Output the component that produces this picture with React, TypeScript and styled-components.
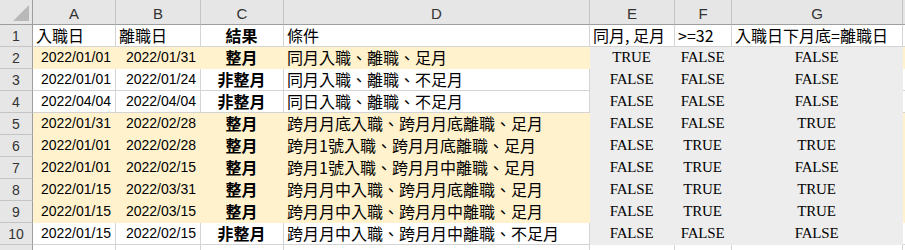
import styled, { createGlobalStyle } from 'styled-components';

const GlobalStyle = createGlobalStyle`
  html, body {
    margin: 0;
    padding: 0;
    background: #ffffff;
  }
`;

type Fill = 'none' | 'yellow' | 'gray';

const fills: Record<Fill, string> = {
  none: '#ffffff',
  yellow: '#fff2cc',
  gray: '#ededed',
};

const Sheet = styled.div`
  display: grid;
  grid-template-columns: 33px 83px 85px 83px 306px 85px 57px 171px 1fr;
  grid-template-rows: 25px repeat(11, 22px);
  width: 905px;
  height: 250px;
  overflow: hidden;
  background: #ffffff;
`;

const Corner = styled.div`
  position: relative;
  background: #e6e6e6;
  border-right: 1px solid #9e9e9e;
  border-bottom: 1px solid #9e9e9e;
  box-sizing: border-box;

  &::after {
    content: '';
    position: absolute;
    right: 3px;
    bottom: 3px;
    width: 0;
    height: 0;
    border-left: 16px solid transparent;
    border-bottom: 16px solid #b9b9b9;
  }
`;

const ColHeader = styled.div`
  display: flex;
  align-items: center;
  justify-content: center;
  background: #e6e6e6;
  border-right: 1px solid #c4c4c4;
  border-bottom: 1px solid #9e9e9e;
  box-sizing: border-box;
  font-family: 'Liberation Sans', Arial, sans-serif;
  font-size: 15px;
  color: #333333;
  padding-top: 2px;
`;

const RowHeader = styled.div`
  display: flex;
  align-items: center;
  justify-content: center;
  background: #e6e6e6;
  border-right: 1px solid #9e9e9e;
  border-bottom: 1px solid #c4c4c4;
  box-sizing: border-box;
  font-family: 'Liberation Sans', Arial, sans-serif;
  font-size: 14px;
  color: #333333;
`;

type Kind = 'date' | 'text' | 'bold' | 'bool';

const Cell = styled.div<{ $fill: Fill; $kind: Kind; $align: 'left' | 'center' | 'right' }>`
  display: flex;
  align-items: flex-end;
  justify-content: ${(p) =>
    p.$align === 'left' ? 'flex-start' : p.$align === 'right' ? 'flex-end' : 'center'};
  box-sizing: border-box;
  background: ${(p) => fills[p.$fill]};
  border-right: 1px solid ${(p) => (p.$fill === 'none' ? '#d4d4d4' : fills[p.$fill])};
  border-bottom: 1px solid ${(p) => (p.$fill === 'none' ? '#d4d4d4' : fills[p.$fill])};
  padding: 0 4px 1px 3px;
  white-space: nowrap;
  overflow: visible;
  color: #000000;
  line-height: 20px;
  font-family: ${(p) =>
    p.$kind === 'date'
      ? "'Liberation Sans', 'Noto Sans CJK TC', sans-serif"
      : p.$kind === 'bool'
      ? "'Liberation Serif', 'Noto Sans CJK TC', serif"
      : "'Noto Sans CJK TC', 'Liberation Sans', sans-serif"};
  font-size: ${(p) => (p.$kind === 'date' ? '14px' : p.$kind === 'bool' ? '15px' : '16px')};
  letter-spacing: ${(p) => (p.$kind === 'bool' ? '-0.2px' : 'normal')};
  font-weight: ${(p) => (p.$kind === 'bold' ? 700 : 400)};
`;

type Row = {
  fill: Fill;
  start: string;
  end: string;
  result: string;
  cond: string;
  e: string;
  f: string;
  g: string;
};

const rows: Row[] = [
  { fill: 'yellow', start: '2022/01/01', end: '2022/01/31', result: '整月', cond: '同月入職、離職、足月', e: 'TRUE', f: 'FALSE', g: 'FALSE' },
  { fill: 'none', start: '2022/01/01', end: '2022/01/24', result: '非整月', cond: '同月入職、離職、不足月', e: 'FALSE', f: 'FALSE', g: 'FALSE' },
  { fill: 'none', start: '2022/04/04', end: '2022/04/04', result: '非整月', cond: '同日入職、離職、不足月', e: 'FALSE', f: 'FALSE', g: 'FALSE' },
  { fill: 'yellow', start: '2022/01/31', end: '2022/02/28', result: '整月', cond: '跨月月底入職、跨月月底離職、足月', e: 'FALSE', f: 'FALSE', g: 'TRUE' },
  { fill: 'yellow', start: '2022/01/01', end: '2022/02/28', result: '整月', cond: '跨月1號入職、跨月月底離職、足月', e: 'FALSE', f: 'TRUE', g: 'TRUE' },
  { fill: 'yellow', start: '2022/01/01', end: '2022/02/15', result: '整月', cond: '跨月1號入職、跨月月中離職、足月', e: 'FALSE', f: 'TRUE', g: 'FALSE' },
  { fill: 'yellow', start: '2022/01/15', end: '2022/03/31', result: '整月', cond: '跨月月中入職、跨月月底離職、足月', e: 'FALSE', f: 'TRUE', g: 'TRUE' },
  { fill: 'yellow', start: '2022/01/15', end: '2022/03/15', result: '整月', cond: '跨月月中入職、跨月月中離職、足月', e: 'FALSE', f: 'TRUE', g: 'TRUE' },
  { fill: 'none', start: '2022/01/15', end: '2022/02/15', result: '非整月', cond: '跨月月中入職、跨月月中離職、不足月', e: 'FALSE', f: 'FALSE', g: 'FALSE' },
];

const columns = ['A', 'B', 'C', 'D', 'E', 'F', 'G', ''];

const App = () => (
  <>
    <GlobalStyle />
    <Sheet>
      <Corner />
      {columns.map((c, i) => (
        <ColHeader key={i}>{c}</ColHeader>
      ))}

      <RowHeader>1</RowHeader>
      <Cell $fill="none" $kind="text" $align="left">入職日</Cell>
      <Cell $fill="none" $kind="text" $align="left">離職日</Cell>
      <Cell $fill="none" $kind="bold" $align="center">結果</Cell>
      <Cell $fill="none" $kind="text" $align="left">條件</Cell>
      <Cell $fill="none" $kind="text" $align="left">同月, 足月</Cell>
      <Cell $fill="none" $kind="text" $align="left">&gt;=32</Cell>
      <Cell $fill="none" $kind="text" $align="left">入職日下月底=離職日</Cell>
      <Cell $fill="none" $kind="text" $align="left" />

      {rows.map((r, i) => (
        <>
          <RowHeader key={`h${i}`}>{i + 2}</RowHeader>
          <Cell $fill={r.fill} $kind="date" $align="right">{r.start}</Cell>
          <Cell $fill={r.fill} $kind="date" $align="right">{r.end}</Cell>
          <Cell $fill={r.fill} $kind="bold" $align="center">{r.result}</Cell>
          <Cell $fill={r.fill} $kind="text" $align="left">{r.cond}</Cell>
          <Cell $fill="gray" $kind="bool" $align="center">{r.e}</Cell>
          <Cell $fill="gray" $kind="bool" $align="center">{r.f}</Cell>
          <Cell $fill="gray" $kind="bool" $align="center">{r.g}</Cell>
          <Cell $fill={r.fill} $kind="text" $align="left" />
        </>
      ))}

      <RowHeader />
      {columns.map((_, i) => (
        <Cell key={`e${i}`} $fill="none" $kind="text" $align="left" />
      ))}
    </Sheet>
  </>
);

export default App;
